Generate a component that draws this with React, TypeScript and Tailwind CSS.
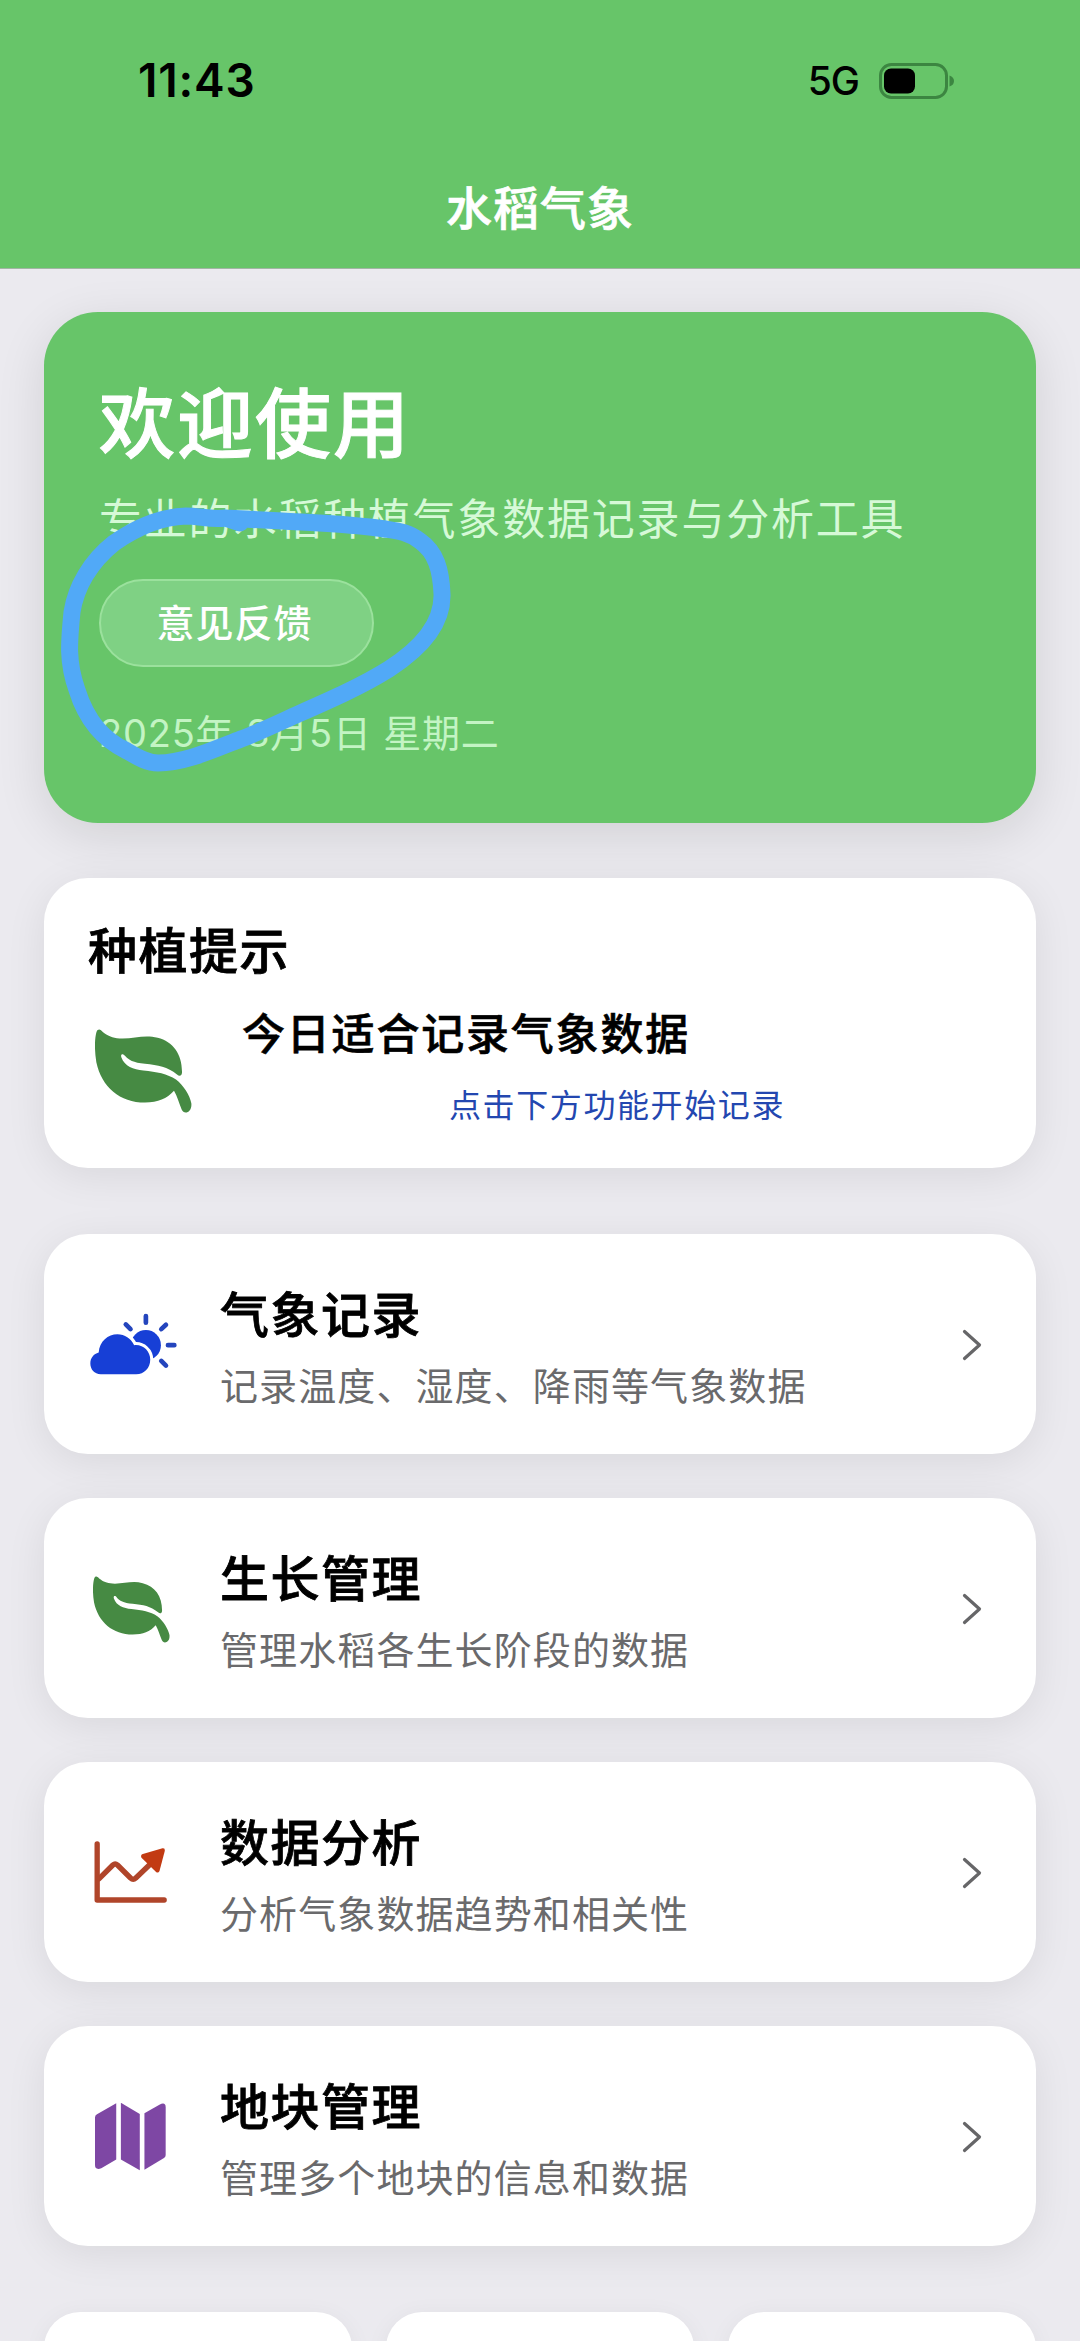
import type { ReactNode } from "react";

interface MenuItem {
  id: string;
  title: string;
  description: string;
  icon: ReactNode;
}

function LeafIcon({ className }: { className?: string }) {
  return (
    <svg viewBox="15 26 291 251" className={className} fill="#468a43">
      <path d="M28 27C38 29 48 54 98 54C135 54 165 42 203 52C250 64 277 102 276 157C275 168 267 168 261 162C232 139 205 134 165 130C130 127 115 118 105 106C98 97 91 101 94 110C104 138 130 146 160 150C200 154 232 160 258 177C280 193 300 226 304 248C307 276 282 284 275 267C266 246 262 228 252 211C230 235 205 246 165 246C90 246 35 200 19 125C13 90 14 55 19 36C21 29 24 27 28 27Z" />
    </svg>
  );
}

function CloudSunIcon() {
  return (
    <svg viewBox="184 278 260 185" className="ml-[3px] w-[87px] h-[62px] shrink-0">
      <circle cx="351" cy="374" r="45" fill="#173fd6" />
      <path
        d="M351 287V307M291 312L305 326M411 313L397 326M417 374H436M397 421L411 435"
        stroke="#2445bd"
        strokeWidth="14"
        strokeLinecap="round"
        fill="none"
      />
      <path
        d="M216 461C197 461 185 446 185 429C185 412 195 400 210 396C212 362 238 341 266 341C288 341 306 353 316 374C343 371 364 392 364 417C364 443 346 461 322 461Z"
        fill="#173fd6"
        stroke="#ffffff"
        strokeWidth="18"
        paintOrder="stroke"
      />
    </svg>
  );
}

function ChartIcon() {
  return (
    <svg viewBox="198 272 218 186" className="mr-[3px] w-[73px] h-[62px]">
      <g stroke="#b0452a" strokeWidth="16" strokeLinecap="round" fill="none">
        <path d="M207 281V449H408" strokeLinejoin="round" />
        <path d="M213 385L254 344Q261 338 268 344L307 383Q315 390 323 383L376 332" />
      </g>
      <path
        d="M344 311L403 294Q411 293 410 301L394 362Q390 370 383 364L340 322Q336 314 344 311Z"
        fill="#c23a12"
      />
    </svg>
  );
}

function MapIcon() {
  return (
    <svg viewBox="198 275 214 206" className="mr-[3px] w-[71px] h-[69px]" fill="#7e47a4">
      <path d="M262 278V447L217 474Q198 480 198 464V321Q198 314 204 311Z" />
      <path d="M276 276L333 310V480L276 447Z" />
      <path d="M347 308L392 282Q411 273 411 290V434Q411 440 406 443L347 478Z" />
    </svg>
  );
}

function ChevronIcon() {
  return (
    <svg viewBox="0 0 20 32" className="w-5 h-8 mt-0.5" fill="none">
      <path
        d="M2.5 2.5L17.5 16L2.5 29.5"
        stroke="#666668"
        strokeWidth="3.2"
        strokeLinecap="round"
        strokeLinejoin="round"
      />
    </svg>
  );
}

function BatteryIcon() {
  return (
    <svg viewBox="0 0 76 36" className="w-[76px] h-9">
      <rect x="1.5" y="1.5" width="66" height="33" rx="11" fill="none" stroke="#3c8641" strokeWidth="3" />
      <rect x="5" y="5.5" width="31" height="25" rx="7" fill="#000000" />
      <path d="M70.5 12.5Q75 14 75 18T70.5 23.5Z" fill="#3c8641" />
    </svg>
  );
}

const menuItems: MenuItem[] = [
  {
    id: "weather",
    title: "气象记录",
    description: "记录温度、湿度、降雨等气象数据",
    icon: <CloudSunIcon />,
  },
  {
    id: "growth",
    title: "生长管理",
    description: "管理水稻各生长阶段的数据",
    icon: <LeafIcon className="mr-px mt-0.5 w-[77px] h-[67px]" />,
  },
  {
    id: "analysis",
    title: "数据分析",
    description: "分析气象数据趋势和相关性",
    icon: <ChartIcon />,
  },
  {
    id: "fields",
    title: "地块管理",
    description: "管理多个地块的信息和数据",
    icon: <MapIcon />,
  },
];

function Header() {
  return (
    <header className="relative flex flex-col h-[269px] shrink-0 bg-[#67c569] border-b border-[#a3b5a5]">
      <div className="flex items-center justify-between h-[161px] pl-[138px] pr-[125px]">
        <span className="text-[46px] font-semibold text-black tracking-[0.8px]">11:43</span>
        <div className="flex items-center gap-5">
          <span className="mt-0.5 text-[39px] font-medium text-black tracking-[-1px]">5G</span>
          <BatteryIcon />
        </div>
      </div>
      <h1 className="mt-[17px] text-center text-[46px] leading-[60px] tracking-[1px] font-medium text-white [-webkit-text-stroke:0.7px]">
        水稻气象
      </h1>
    </header>
  );
}

function WelcomeCard() {
  return (
    <section className="relative flex flex-col items-start h-[511px] px-[55px] pt-[67px] rounded-[54px] bg-[#67c569] shadow-[0_12px_50px_rgba(0,0,0,0.11)]">
      <h2 className="text-[76px] leading-[90px] tracking-[2px] font-medium text-white [-webkit-text-stroke:1px]">
        欢迎使用
      </h2>
      <p className="mt-5 text-[43px] leading-[60px] tracking-[1.8px] font-normal text-[#d6f9d7]">
        专业的水稻种植气象数据记录与分析工具
      </p>
      <button className="flex items-center justify-center mt-[30px] w-[275px] h-[88px] pr-1 rounded-full border-2 border-[#9be19d] bg-[#7fd184] text-[38px] tracking-[1px] font-medium text-white">
        意见反馈
      </button>
      <p className="mt-[41px] text-[38px] leading-[50px] tracking-[0.8px] font-normal text-[#c3f4c4]">
        2025年 8月5日 星期二
      </p>
      {/* freehand marker around the feedback button */}
      <svg
        viewBox="44 312 992 511"
        className="absolute left-0 top-0 w-[992px] h-[511px] pointer-events-none"
        fill="none"
      >
        <path
          d="M240 523L225 518C212 520 199 516 186 516C160 517 134 529 114 543C90 562 76 587 72 612C69 642 67 662 77 690C87 722 104 740 127 751C139 758 148 763 158 763C185 763 215 749 241 739C260 732 278 723 296 715C330 700 362 686 389 669C417 651 443 626 442 594C441 570 436 552 420 541C408 532 398 531 385 529C352 524 318 523 282 521L225 518"
          stroke="#51a9f7"
          strokeWidth="17"
          strokeLinecap="round"
          strokeLinejoin="round"
        />
      </svg>
    </section>
  );
}

function TipCard() {
  return (
    <section className="flex flex-col mt-[55px] h-[290px] px-11 pt-[44px] rounded-[44px] bg-white shadow-[0_8px_40px_rgba(0,0,0,0.08)]">
      <h3 className="text-[49px] leading-[60px] tracking-[1.5px] font-medium text-black [-webkit-text-stroke:0.8px]">
        种植提示
      </h3>
      <div className="flex mt-6">
        <LeafIcon className="mt-[23px] ml-[7px] w-[97px] h-[84px]" />
        <div className="flex flex-col flex-1 ml-[50px]">
          <p className="text-[43px] leading-[56px] tracking-[1.8px] font-medium text-black [-webkit-text-stroke:0.6px]">
            今日适合记录气象数据
          </p>
          <p className="mt-[21px] text-center text-[32px] leading-[46px] tracking-[1.6px] text-[#2347b0]">
            点击下方功能开始记录
          </p>
        </div>
      </div>
    </section>
  );
}

function MenuCard({ item }: { item: MenuItem }) {
  return (
    <button className="flex items-center h-[220px] pr-[54px] pl-[43px] rounded-[44px] bg-white text-left shadow-[0_8px_40px_rgba(0,0,0,0.08)]">
      <div className="flex items-center justify-center w-[90px] h-[92px]">{item.icon}</div>
      <div className="flex flex-col flex-1 ml-[43px] mt-[8px]">
        <span className="text-[49px] leading-[62px] tracking-[1.5px] font-medium text-black [-webkit-text-stroke:0.8px]">
          {item.title}
        </span>
        <span className="mt-[14px] text-[38px] leading-[50px] tracking-[1.1px] font-normal text-[#6a6a6c]">
          {item.description}
        </span>
      </div>
      <ChevronIcon />
    </button>
  );
}

export default function App() {
  return (
    <div className="flex flex-col w-[1080px] h-[2341px] overflow-hidden bg-[#ebeaef] font-['Inter','Noto_Sans_CJK_SC',sans-serif]">
      <Header />
      <main className="flex flex-col px-11 pt-[43px]">
        <WelcomeCard />
        <TipCard />
        <div className="flex flex-col gap-11 mt-[66px]">
          {menuItems.map((item) => (
            <MenuCard key={item.id} item={item} />
          ))}
        </div>
        <div className="grid grid-cols-3 gap-[34px] mt-[66px]">
          <div className="h-[220px] rounded-[36px] bg-white shadow-[0_4px_24px_rgba(0,0,0,0.05)]" />
          <div className="h-[220px] rounded-[36px] bg-white shadow-[0_4px_24px_rgba(0,0,0,0.05)]" />
          <div className="h-[220px] rounded-[36px] bg-white shadow-[0_4px_24px_rgba(0,0,0,0.05)]" />
        </div>
      </main>
    </div>
  );
}
